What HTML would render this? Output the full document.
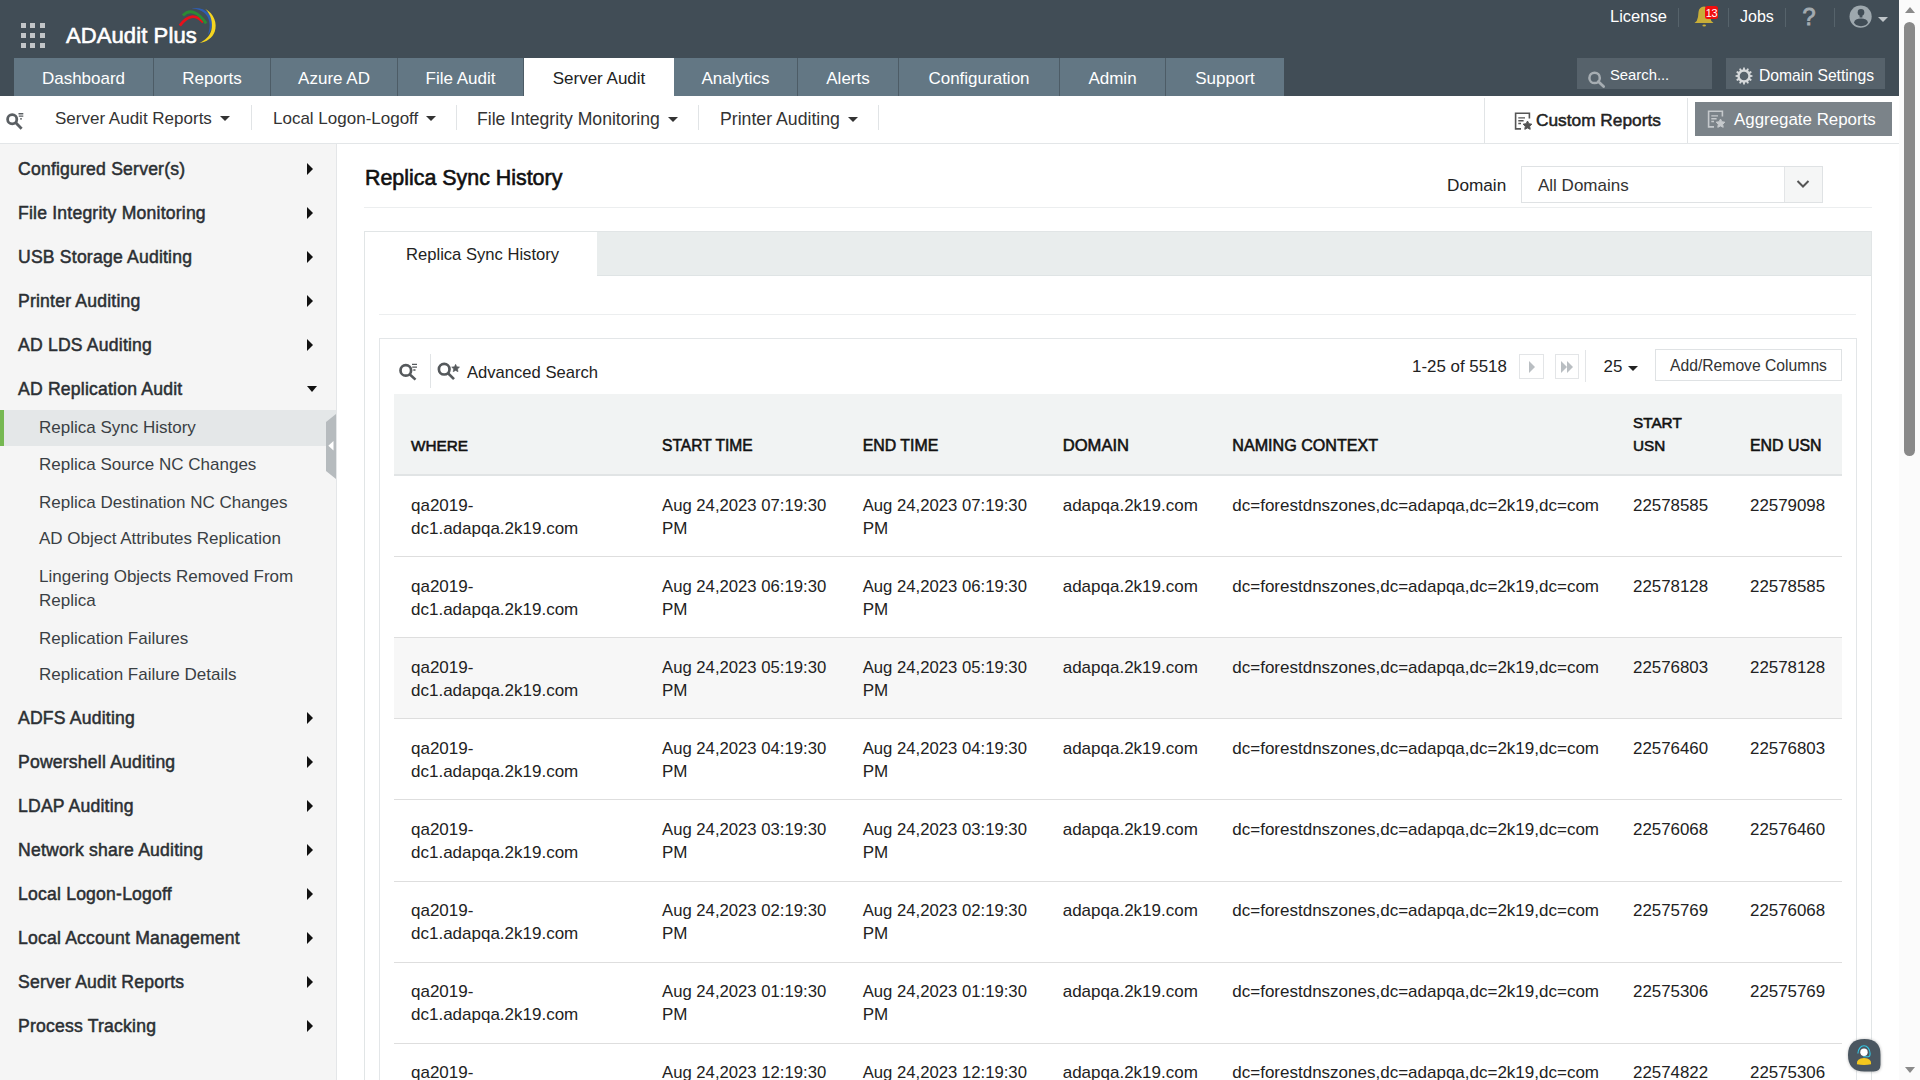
<!DOCTYPE html>
<html><head><meta charset="utf-8">
<style>
*{box-sizing:border-box;margin:0;padding:0}
html,body{width:1920px;height:1080px;overflow:hidden;background:#fff;font-family:"Liberation Sans",sans-serif;color:#222}
.a{position:absolute;white-space:nowrap}
#hdr{position:absolute;left:0;top:0;width:1899px;height:96px;background:#414d56}
.gsq{position:absolute;width:5px;height:5px;background:#c3c6c9}
.tab{position:absolute;top:58px;height:38px;background:#637784;color:#fff;font-size:17px;text-align:center;line-height:42px;border-right:1px solid #4d5c66}
.tab.on{background:#fff;color:#222;border-right:none}
.hsep{position:absolute;top:8px;width:1px;height:19px;background:#56636b}
#sub{position:absolute;left:0;top:96px;width:1899px;height:48px;background:#fff;border-bottom:1px solid #e3e6e8}
.sn{position:absolute;top:108px;font-size:17px;color:#333;line-height:22px}
.caret{display:inline-block;width:0;height:0;border-left:5px solid transparent;border-right:5px solid transparent;border-top:5px solid #333;vertical-align:middle;margin-left:8px;position:relative;top:-1px}
.vsep{position:absolute;width:1px;background:#e1e4e6}
#side{position:absolute;left:0;top:144px;width:337px;height:936px;background:#f5f5f5;border-right:1px solid #e4e6e8}
.si{position:absolute;left:18px;font-size:16.2px;font-weight:bold;color:#2e3236;line-height:20px}
.ss{position:absolute;left:39px;font-size:16.6px;color:#3a3e42;line-height:25px}
.rarr{position:absolute;left:307px;width:0;height:0;border-top:6px solid transparent;border-bottom:6px solid transparent;border-left:6px solid #111}
#scroll{position:absolute;left:1899px;top:0;width:21px;height:1080px;background:#fbfbfb}
</style></head><body>
<div id="hdr"></div>
<!-- grid icon -->
<div class="gsq" style="left:21px;top:23px"></div><div class="gsq" style="left:30px;top:23px"></div><div class="gsq" style="left:40px;top:23px"></div>
<div class="gsq" style="left:21px;top:33px"></div><div class="gsq" style="left:30px;top:33px"></div><div class="gsq" style="left:40px;top:33px"></div>
<div class="gsq" style="left:21px;top:43px"></div><div class="gsq" style="left:30px;top:43px"></div><div class="gsq" style="left:40px;top:43px"></div>
<div class="a" style="left:66px;top:23px;font-size:22px;color:#fff;line-height:26px;letter-spacing:0.1px;-webkit-text-stroke:0.6px #fff">ADAudit Plus</div>
<svg class="a" style="left:170px;top:0" width="60" height="50" viewBox="170 0 60 50">
<path d="M179.8 25.6 Q191.5 9.6 203.3 22.3" stroke="#e8101a" stroke-width="2.8" fill="none"/>
<path d="M182.9 15.6 Q193 5.2 206.2 23.4" stroke="#2c8a34" stroke-width="2.9" fill="none"/>
<path d="M191.6 8.3 C205 6.5 213.5 15 212 25 C211.5 29 210 32.5 207.8 35 C209.5 30 210 26 209.3 22 C208 14 202 9.5 191.6 8.3Z" fill="#2f5db0"/>
<path d="M205.4 9 C214 13.5 217.5 23.5 214.8 31.5 C212.5 38 206.5 42 199.4 43 C205 40.5 209.5 36.5 211.3 30.5 C213.2 23 211 14.5 205.4 9Z" fill="#f5d520"/>
</svg>

<!-- nav tabs -->
<div class="tab" style="left:14px;width:140px">Dashboard</div>
<div class="tab" style="left:154px;width:117px">Reports</div>
<div class="tab" style="left:271px;width:127px">Azure AD</div>
<div class="tab" style="left:398px;width:126px">File Audit</div>
<div class="tab on" style="left:524px;width:150px">Server Audit</div>
<div class="tab" style="left:674px;width:124px">Analytics</div>
<div class="tab" style="left:798px;width:101px">Alerts</div>
<div class="tab" style="left:899px;width:161px">Configuration</div>
<div class="tab" style="left:1060px;width:106px">Admin</div>
<div class="tab" style="left:1166px;width:118px;border-right:none">Support</div>

<!-- header right -->
<div class="a" style="left:1610px;top:6px;font-size:16.5px;color:#fff;line-height:20px">License</div>
<div class="hsep" style="left:1678px"></div>
<svg class="a" style="left:1690px;top:0px" width="32" height="30" viewBox="1690 0 32 30">
<path d="M1694.5 23 Q1697.5 21 1698 17 L1698.5 12 Q1699 7 1704 6.5 Q1709 7 1709.5 12 L1710 17 Q1710.5 21 1713.5 23 Z" fill="#c8ae38"/>
<ellipse cx="1704.2" cy="25.5" rx="1.8" ry="1" fill="#c8ae38"/>
<rect x="1705" y="6" width="13" height="13" rx="2.5" fill="#f00e0e"/>
<text x="1711.6" y="17" font-size="11" font-family="Liberation Sans" fill="#fff" text-anchor="middle" letter-spacing="-0.3">13</text>
</svg>
<div class="hsep" style="left:1728px"></div>
<div class="a" style="left:1740px;top:7px;font-size:16px;color:#fff;line-height:20px">Jobs</div>
<div class="hsep" style="left:1785px"></div>
<div class="a" style="left:1802.5px;top:4px;font-size:23.5px;color:#a3abb0;line-height:26px;-webkit-text-stroke:0.9px #a3abb0">?</div>
<div class="hsep" style="left:1834px"></div>
<svg class="a" style="left:1848px;top:5px" width="42" height="24" viewBox="0 0 42 24">
<defs><clipPath id="uc"><circle cx="12.6" cy="11.6" r="11.1"/></clipPath></defs>
<circle cx="12.6" cy="11.6" r="11.1" fill="#9ea8ae"/>
<circle cx="13" cy="7.4" r="3.3" fill="#414d56"/>
<rect x="11.6" y="9.5" width="2.8" height="3" fill="#414d56"/>
<ellipse cx="13" cy="17.3" rx="6.8" ry="3.9" fill="#414d56" clip-path="url(#uc)"/>
<path d="M30 12 L40 12 L35 17Z" fill="#bfc5c9"/>
</svg>
<div class="a" style="left:1577px;top:58px;width:135px;height:31px;background:#56626b"></div>
<svg class="a" style="left:1587px;top:70px" width="20" height="20" viewBox="0 0 20 20"><circle cx="7.6" cy="7.9" r="5.2" stroke="#a6adb2" stroke-width="2.5" fill="none"/><path d="M11.3 11.6 L16.6 16.6" stroke="#a6adb2" stroke-width="2.8" stroke-linecap="round"/></svg>
<div class="a" style="left:1610px;top:66px;font-size:14.8px;color:#fff;line-height:18px">Search...</div>
<div class="a" style="left:1726px;top:58px;width:159px;height:31px;background:#56626b"></div>
<svg class="a" style="left:1733.5px;top:66.4px" width="20" height="20" viewBox="0 0 20 20"><path fill-rule="evenodd" d="M16.52 8.97 L18.46 9.20 L18.46 10.80 L16.52 11.03 L16.16 12.37 L17.73 13.54 L16.93 14.92 L15.13 14.15 L14.15 15.13 L14.92 16.93 L13.54 17.73 L12.37 16.16 L11.03 16.52 L10.80 18.46 L9.20 18.46 L8.97 16.52 L7.63 16.16 L6.46 17.73 L5.08 16.93 L5.85 15.13 L4.87 14.15 L3.07 14.92 L2.27 13.54 L3.84 12.37 L3.48 11.03 L1.54 10.80 L1.54 9.20 L3.48 8.97 L3.84 7.63 L2.27 6.46 L3.07 5.08 L4.87 5.85 L5.85 4.87 L5.08 3.07 L6.46 2.27 L7.63 3.84 L8.97 3.48 L9.20 1.54 L10.80 1.54 L11.03 3.48 L12.37 3.84 L13.54 2.27 L14.92 3.07 L14.15 4.87 L15.13 5.85 L16.93 5.08 L17.73 6.46 L16.16 7.63Z M14.3 10 A4.3 4.3 0 1 0 5.7 10 A4.3 4.3 0 1 0 14.3 10Z" fill="#d6d9db"/></svg>
<div class="a" style="left:1759px;top:66.5px;font-size:15.7px;color:#fff;line-height:18px">Domain Settings</div>

<!-- scrollbar -->
<div id="scroll"></div>

<!-- sub nav -->
<div id="sub"></div>
<svg class="a" style="left:5px;top:110px" width="20" height="22" viewBox="0 0 20 22"><circle cx="7.2" cy="9.3" r="4.6" stroke="#5a5f63" stroke-width="2.8" fill="none"/><path d="M10.8 12.8 L16.6 18.8" stroke="#5a5f63" stroke-width="2.8"/><path d="M13.5 3.7h4.8M13.8 6.1h4.5M15 8.9h2" stroke="#5a5f63" stroke-width="1.4"/></svg>
<div class="sn" style="left:55px">Server Audit Reports<span class="caret"></span></div>
<div class="vsep" style="left:251px;top:105px;height:25px"></div>
<div class="sn" style="left:273px">Local Logon-Logoff<span class="caret"></span></div>
<div class="vsep" style="left:456px;top:105px;height:25px"></div>
<div class="sn" style="left:477px;font-size:17.6px">File Integrity Monitoring<span class="caret"></span></div>
<div class="vsep" style="left:698px;top:105px;height:25px"></div>
<div class="sn" style="left:720px;font-size:17.7px">Printer Auditing<span class="caret"></span></div>
<div class="vsep" style="left:878px;top:105px;height:25px"></div>
<div class="vsep" style="left:1484px;top:98px;height:45px"></div>
<svg class="a" style="left:1514px;top:112px" width="20" height="20" viewBox="0 0 20 20"><path d="M7 16.9 H1.6 V1.3 H15.4 V6.6" stroke="#555" stroke-width="1.6" fill="none"/><path d="M4.3 5.9 H11 M4.3 8.8 H9.6 M4.3 11.5 H7" stroke="#555" stroke-width="1.4"/><path d="M13.50 9.00 L14.85 11.74 L17.87 12.18 L15.69 14.31 L16.20 17.32 L13.50 15.90 L10.80 17.32 L11.31 14.31 L9.13 12.18 L12.15 11.74Z" fill="#555" stroke="#555" stroke-width="1" stroke-linejoin="round"/></svg>
<div class="a" style="left:1536px;top:109px;font-size:17.3px;color:#222;line-height:22px;-webkit-text-stroke:0.5px #222">Custom Reports</div>
<div class="vsep" style="left:1687px;top:98px;height:45px"></div>
<div class="a" style="left:1695px;top:102px;width:197px;height:34px;background:#7b8389"></div>
<svg class="a" style="left:1707px;top:110px" width="20" height="20" viewBox="0 0 20 20"><path d="M7 16.9 H1.6 V1.3 H15.4 V6.6" stroke="#c5c9cc" stroke-width="1.6" fill="none"/><path d="M4.3 5.9 H11 M4.3 8.8 H9.6 M4.3 11.5 H7" stroke="#c5c9cc" stroke-width="1.4"/><path d="M13.50 9.00 L14.85 11.74 L17.87 12.18 L15.69 14.31 L16.20 17.32 L13.50 15.90 L10.80 17.32 L11.31 14.31 L9.13 12.18 L12.15 11.74Z" fill="#c5c9cc" stroke="#c5c9cc" stroke-width="1" stroke-linejoin="round"/></svg>
<div class="a" style="left:1734px;top:109px;font-size:16.9px;color:#fff;line-height:22px">Aggregate Reports</div>

<div id="side"></div>
<div class="a" style="left:18px;top:158px;font-size:17.6px;line-height:22px;color:#2b2f33;-webkit-text-stroke:0.5px #2b2f33;letter-spacing:0.2px">Configured Server(s)</div>
<div class="rarr" style="top:163px"></div>
<div class="a" style="left:18px;top:202px;font-size:17.6px;line-height:22px;color:#2b2f33;-webkit-text-stroke:0.5px #2b2f33;letter-spacing:0.2px">File Integrity Monitoring</div>
<div class="rarr" style="top:207px"></div>
<div class="a" style="left:18px;top:246px;font-size:17.6px;line-height:22px;color:#2b2f33;-webkit-text-stroke:0.5px #2b2f33;letter-spacing:0.2px">USB Storage Auditing</div>
<div class="rarr" style="top:251px"></div>
<div class="a" style="left:18px;top:290px;font-size:17.6px;line-height:22px;color:#2b2f33;-webkit-text-stroke:0.5px #2b2f33;letter-spacing:0.2px">Printer Auditing</div>
<div class="rarr" style="top:295px"></div>
<div class="a" style="left:18px;top:334px;font-size:17.6px;line-height:22px;color:#2b2f33;-webkit-text-stroke:0.5px #2b2f33;letter-spacing:0.2px">AD LDS Auditing</div>
<div class="rarr" style="top:339px"></div>
<div class="a" style="left:18px;top:378px;font-size:17.6px;line-height:22px;color:#2b2f33;-webkit-text-stroke:0.5px #2b2f33;letter-spacing:0.2px">AD Replication Audit</div>
<div class="a" style="left:307px;top:386px;width:0;height:0;border-left:5.5px solid transparent;border-right:5.5px solid transparent;border-top:6px solid #111"></div>
<div class="a" style="left:0;top:410px;width:336px;height:36px;background:#e4e7e8"></div>
<div class="a" style="left:0;top:410px;width:4px;height:36px;background:#76b852"></div>
<div class="a" style="left:39px;top:417px;font-size:17px;line-height:22px;color:#3a3f44;">Replica Sync History</div>
<div class="a" style="left:39px;top:454px;font-size:17px;line-height:22px;color:#3a3f44;">Replica Source NC Changes</div>
<div class="a" style="left:39px;top:492px;font-size:17px;line-height:22px;color:#3a3f44;">Replica Destination NC Changes</div>
<div class="a" style="left:39px;top:528px;font-size:17px;line-height:22px;color:#3a3f44;">AD Object Attributes Replication</div>
<div class="a" style="left:39px;top:566px;font-size:17px;line-height:22px;color:#3a3f44;">Lingering Objects Removed From</div>
<div class="a" style="left:39px;top:590px;font-size:17px;line-height:22px;color:#3a3f44;">Replica</div>
<div class="a" style="left:39px;top:628px;font-size:17px;line-height:22px;color:#3a3f44;">Replication Failures</div>
<div class="a" style="left:39px;top:664px;font-size:17px;line-height:22px;color:#3a3f44;">Replication Failure Details</div>
<svg class="a" style="left:326px;top:414px" width="11" height="65" viewBox="0 0 11 65"><path d="M10 0 L0 8 L0 57 L10 65Z" fill="#b6bbbe"/><path d="M7.5 27 L2.3 31.8 L7.5 36.6Z" fill="#fff"/></svg>
<div class="a" style="left:18px;top:707px;font-size:17.6px;line-height:22px;color:#2b2f33;-webkit-text-stroke:0.5px #2b2f33;letter-spacing:0.2px">ADFS Auditing</div>
<div class="rarr" style="top:712px"></div>
<div class="a" style="left:18px;top:751px;font-size:17.6px;line-height:22px;color:#2b2f33;-webkit-text-stroke:0.5px #2b2f33;letter-spacing:0.2px">Powershell Auditing</div>
<div class="rarr" style="top:756px"></div>
<div class="a" style="left:18px;top:795px;font-size:17.6px;line-height:22px;color:#2b2f33;-webkit-text-stroke:0.5px #2b2f33;letter-spacing:0.2px">LDAP Auditing</div>
<div class="rarr" style="top:800px"></div>
<div class="a" style="left:18px;top:839px;font-size:17.6px;line-height:22px;color:#2b2f33;-webkit-text-stroke:0.5px #2b2f33;letter-spacing:0.2px">Network share Auditing</div>
<div class="rarr" style="top:844px"></div>
<div class="a" style="left:18px;top:883px;font-size:17.6px;line-height:22px;color:#2b2f33;-webkit-text-stroke:0.5px #2b2f33;letter-spacing:0.2px">Local Logon-Logoff</div>
<div class="rarr" style="top:888px"></div>
<div class="a" style="left:18px;top:927px;font-size:17.6px;line-height:22px;color:#2b2f33;-webkit-text-stroke:0.5px #2b2f33;letter-spacing:0.2px">Local Account Management</div>
<div class="rarr" style="top:932px"></div>
<div class="a" style="left:18px;top:971px;font-size:17.6px;line-height:22px;color:#2b2f33;-webkit-text-stroke:0.5px #2b2f33;letter-spacing:0.2px">Server Audit Reports</div>
<div class="rarr" style="top:976px"></div>
<div class="a" style="left:18px;top:1015px;font-size:17.6px;line-height:22px;color:#2b2f33;-webkit-text-stroke:0.5px #2b2f33;letter-spacing:0.2px">Process Tracking</div>
<div class="rarr" style="top:1020px"></div>
<div class="a" style="left:365px;top:165px;font-size:21.4px;line-height:27px;color:#111;-webkit-text-stroke:0.6px #111">Replica Sync History</div>
<div class="a" style="left:1447px;top:174px;font-size:17.2px;line-height:22px;color:#222;">Domain</div>
<div class="a" style="left:1521px;top:166px;width:302px;height:37px;border:1px solid #dfe2e4;background:#fff"></div>
<div class="a" style="left:1784px;top:167px;width:38px;height:35px;background:#f5f6f6;border-left:1px solid #e3e5e7"></div>
<svg class="a" style="left:1796px;top:179px" width="14" height="10" viewBox="0 0 14 10"><path d="M1.5 2 L7 7.5 L12.5 2" stroke="#555" stroke-width="2" fill="none"/></svg>
<div class="a" style="left:1538px;top:175px;font-size:17px;line-height:22px;color:#333;">All Domains</div>
<div class="a" style="left:364px;top:207px;width:1508px;height:1px;background:#eceeef"></div>
<div class="a" style="left:364px;top:231px;width:1508px;height:860px;border:1px solid #e1e5e6;background:#fff"></div>
<div class="a" style="left:597px;top:232px;width:1274px;height:44px;background:#e9eded;border-bottom:1px solid #dfe4e5"></div>
<div class="a" style="left:406px;top:244px;font-size:16.6px;line-height:21px;color:#222;">Replica Sync History</div>
<div class="a" style="left:379px;top:314px;width:1477px;height:1px;background:#eceeef"></div>
<div class="a" style="left:379px;top:338px;width:1478px;height:760px;border:1px solid #e3e6e8"></div>
<svg class="a" style="left:397px;top:362px" width="22" height="20" viewBox="0 0 22 20"><circle cx="8.8" cy="8.4" r="5.3" stroke="#55595c" stroke-width="2.7" fill="none"/><path d="M12.6 12.2 L18.5 17.6" stroke="#55595c" stroke-width="2.6"/><path d="M15 2.4h5M15.2 5.1h4.8M16.3 8h2.2" stroke="#55595c" stroke-width="1.3"/></svg>
<div class="a" style="left:430px;top:354px;width:1px;height:34px;background:#e1e4e6"></div>
<svg class="a" style="left:436px;top:361px" width="26" height="21" viewBox="0 0 26 21"><circle cx="8.2" cy="8.2" r="5.3" stroke="#55595c" stroke-width="2.7" fill="none"/><path d="M11.8 12 L18 18.2" stroke="#55595c" stroke-width="2.6"/><path d="M19.6 3.3l1.2 2.5 2.7.3-2 1.9.5 2.7-2.4-1.3-2.4 1.3.5-2.7-2-1.9 2.7-.3z" fill="#55595c" stroke="#55595c" stroke-width="0.6" stroke-linejoin="round"/></svg>
<div class="a" style="left:467px;top:362px;font-size:16.6px;line-height:21px;color:#222;">Advanced Search</div>
<div class="a" style="left:1412px;top:356px;font-size:16.9px;line-height:22px;color:#222;">1-25 of 5518</div>
<div class="a" style="left:1519px;top:354px;width:25px;height:25px;border:1px solid #e3e5e7;background:#fff"></div>
<div class="a" style="left:1529px;top:361px;width:0;height:0;border-top:6px solid transparent;border-bottom:6px solid transparent;border-left:6px solid #b9bec2"></div>
<div class="a" style="left:1555px;top:354px;width:24px;height:25px;border:1px solid #e3e5e7;background:#fff"></div>
<div class="a" style="left:1561px;top:361px;width:0;height:0;border-top:6px solid transparent;border-bottom:6px solid transparent;border-left:6px solid #b9bec2"></div>
<div class="a" style="left:1567px;top:361px;width:0;height:0;border-top:6px solid transparent;border-bottom:6px solid transparent;border-left:6px solid #b9bec2"></div>
<div class="a" style="left:1585px;top:350px;width:1px;height:32px;background:#e3e5e7"></div>
<div class="a" style="left:1603.5px;top:356px;font-size:16.9px;line-height:22px;color:#222;">25</div>
<div class="a" style="left:1628px;top:366px;width:0;height:0;border-left:5px solid transparent;border-right:5px solid transparent;border-top:5px solid #222"></div>
<div class="a" style="left:1655px;top:349px;width:187px;height:32px;border:1px solid #dfe2e4;background:#fff"></div>
<div class="a" style="left:1670px;top:356px;font-size:15.7px;line-height:20px;color:#333;">Add/Remove Columns</div>
<div class="a" style="left:394px;top:394px;width:1448px;height:82px;background:#f1f3f3;border-bottom:2px solid #e1e4e5"></div>
<div class="a" style="left:411px;top:436px;font-size:15.3px;line-height:20px;color:#111;-webkit-text-stroke:0.55px #111">WHERE</div>
<div class="a" style="left:662px;top:436px;font-size:15.6px;line-height:20px;color:#111;-webkit-text-stroke:0.55px #111">START TIME</div>
<div class="a" style="left:862.7px;top:436px;font-size:15.9px;line-height:20px;color:#111;-webkit-text-stroke:0.55px #111">END TIME</div>
<div class="a" style="left:1062.7px;top:435px;font-size:16.6px;line-height:21px;color:#111;-webkit-text-stroke:0.55px #111">DOMAIN</div>
<div class="a" style="left:1232.3px;top:435px;font-size:16.1px;line-height:21px;color:#111;-webkit-text-stroke:0.55px #111">NAMING CONTEXT</div>
<div class="a" style="left:1750px;top:436px;font-size:15.9px;line-height:20px;color:#111;-webkit-text-stroke:0.55px #111">END USN</div>
<div class="a" style="left:1633px;top:413px;font-size:15.3px;line-height:20px;color:#111;-webkit-text-stroke:0.55px #111">START</div>
<div class="a" style="left:1633px;top:436px;font-size:15.3px;line-height:20px;color:#111;-webkit-text-stroke:0.55px #111">USN</div>
<div class="a" style="left:394px;top:556px;width:1448px;height:1px;background:#dedede"></div>
<div class="a" style="left:411px;top:495px;font-size:17px;line-height:22px;color:#222;">qa2019-</div>
<div class="a" style="left:411px;top:518px;font-size:17px;line-height:22px;color:#222;">dc1.adapqa.2k19.com</div>
<div class="a" style="left:662px;top:495px;font-size:16.7px;line-height:21px;color:#222;">Aug 24,2023 07:19:30</div>
<div class="a" style="left:662px;top:518px;font-size:17px;line-height:22px;color:#222;">PM</div>
<div class="a" style="left:862.7px;top:495px;font-size:16.7px;line-height:21px;color:#222;">Aug 24,2023 07:19:30</div>
<div class="a" style="left:862.7px;top:518px;font-size:17px;line-height:22px;color:#222;">PM</div>
<div class="a" style="left:1062.7px;top:495px;font-size:17px;line-height:22px;color:#222;">adapqa.2k19.com</div>
<div class="a" style="left:1232.3px;top:495px;font-size:17px;line-height:22px;color:#222;">dc=forestdnszones,dc=adapqa,dc=2k19,dc=com</div>
<div class="a" style="left:1633px;top:495px;font-size:16.9px;line-height:22px;color:#222;">22578585</div>
<div class="a" style="left:1750px;top:495px;font-size:16.9px;line-height:22px;color:#222;">22579098</div>
<div class="a" style="left:394px;top:637px;width:1448px;height:1px;background:#dedede"></div>
<div class="a" style="left:411px;top:576px;font-size:17px;line-height:22px;color:#222;">qa2019-</div>
<div class="a" style="left:411px;top:599px;font-size:17px;line-height:22px;color:#222;">dc1.adapqa.2k19.com</div>
<div class="a" style="left:662px;top:576px;font-size:16.7px;line-height:21px;color:#222;">Aug 24,2023 06:19:30</div>
<div class="a" style="left:662px;top:599px;font-size:17px;line-height:22px;color:#222;">PM</div>
<div class="a" style="left:862.7px;top:576px;font-size:16.7px;line-height:21px;color:#222;">Aug 24,2023 06:19:30</div>
<div class="a" style="left:862.7px;top:599px;font-size:17px;line-height:22px;color:#222;">PM</div>
<div class="a" style="left:1062.7px;top:576px;font-size:17px;line-height:22px;color:#222;">adapqa.2k19.com</div>
<div class="a" style="left:1232.3px;top:576px;font-size:17px;line-height:22px;color:#222;">dc=forestdnszones,dc=adapqa,dc=2k19,dc=com</div>
<div class="a" style="left:1633px;top:576px;font-size:16.9px;line-height:22px;color:#222;">22578128</div>
<div class="a" style="left:1750px;top:576px;font-size:16.9px;line-height:22px;color:#222;">22578585</div>
<div class="a" style="left:394px;top:638px;width:1448px;height:80px;background:#f7f7f7"></div>
<div class="a" style="left:394px;top:718px;width:1448px;height:1px;background:#dedede"></div>
<div class="a" style="left:411px;top:657px;font-size:17px;line-height:22px;color:#222;">qa2019-</div>
<div class="a" style="left:411px;top:680px;font-size:17px;line-height:22px;color:#222;">dc1.adapqa.2k19.com</div>
<div class="a" style="left:662px;top:657px;font-size:16.7px;line-height:21px;color:#222;">Aug 24,2023 05:19:30</div>
<div class="a" style="left:662px;top:680px;font-size:17px;line-height:22px;color:#222;">PM</div>
<div class="a" style="left:862.7px;top:657px;font-size:16.7px;line-height:21px;color:#222;">Aug 24,2023 05:19:30</div>
<div class="a" style="left:862.7px;top:680px;font-size:17px;line-height:22px;color:#222;">PM</div>
<div class="a" style="left:1062.7px;top:657px;font-size:17px;line-height:22px;color:#222;">adapqa.2k19.com</div>
<div class="a" style="left:1232.3px;top:657px;font-size:17px;line-height:22px;color:#222;">dc=forestdnszones,dc=adapqa,dc=2k19,dc=com</div>
<div class="a" style="left:1633px;top:657px;font-size:16.9px;line-height:22px;color:#222;">22576803</div>
<div class="a" style="left:1750px;top:657px;font-size:16.9px;line-height:22px;color:#222;">22578128</div>
<div class="a" style="left:394px;top:799px;width:1448px;height:1px;background:#dedede"></div>
<div class="a" style="left:411px;top:738px;font-size:17px;line-height:22px;color:#222;">qa2019-</div>
<div class="a" style="left:411px;top:761px;font-size:17px;line-height:22px;color:#222;">dc1.adapqa.2k19.com</div>
<div class="a" style="left:662px;top:738px;font-size:16.7px;line-height:21px;color:#222;">Aug 24,2023 04:19:30</div>
<div class="a" style="left:662px;top:761px;font-size:17px;line-height:22px;color:#222;">PM</div>
<div class="a" style="left:862.7px;top:738px;font-size:16.7px;line-height:21px;color:#222;">Aug 24,2023 04:19:30</div>
<div class="a" style="left:862.7px;top:761px;font-size:17px;line-height:22px;color:#222;">PM</div>
<div class="a" style="left:1062.7px;top:738px;font-size:17px;line-height:22px;color:#222;">adapqa.2k19.com</div>
<div class="a" style="left:1232.3px;top:738px;font-size:17px;line-height:22px;color:#222;">dc=forestdnszones,dc=adapqa,dc=2k19,dc=com</div>
<div class="a" style="left:1633px;top:738px;font-size:16.9px;line-height:22px;color:#222;">22576460</div>
<div class="a" style="left:1750px;top:738px;font-size:16.9px;line-height:22px;color:#222;">22576803</div>
<div class="a" style="left:394px;top:881px;width:1448px;height:1px;background:#dedede"></div>
<div class="a" style="left:411px;top:819px;font-size:17px;line-height:22px;color:#222;">qa2019-</div>
<div class="a" style="left:411px;top:842px;font-size:17px;line-height:22px;color:#222;">dc1.adapqa.2k19.com</div>
<div class="a" style="left:662px;top:819px;font-size:16.7px;line-height:21px;color:#222;">Aug 24,2023 03:19:30</div>
<div class="a" style="left:662px;top:842px;font-size:17px;line-height:22px;color:#222;">PM</div>
<div class="a" style="left:862.7px;top:819px;font-size:16.7px;line-height:21px;color:#222;">Aug 24,2023 03:19:30</div>
<div class="a" style="left:862.7px;top:842px;font-size:17px;line-height:22px;color:#222;">PM</div>
<div class="a" style="left:1062.7px;top:819px;font-size:17px;line-height:22px;color:#222;">adapqa.2k19.com</div>
<div class="a" style="left:1232.3px;top:819px;font-size:17px;line-height:22px;color:#222;">dc=forestdnszones,dc=adapqa,dc=2k19,dc=com</div>
<div class="a" style="left:1633px;top:819px;font-size:16.9px;line-height:22px;color:#222;">22576068</div>
<div class="a" style="left:1750px;top:819px;font-size:16.9px;line-height:22px;color:#222;">22576460</div>
<div class="a" style="left:394px;top:962px;width:1448px;height:1px;background:#dedede"></div>
<div class="a" style="left:411px;top:900px;font-size:17px;line-height:22px;color:#222;">qa2019-</div>
<div class="a" style="left:411px;top:923px;font-size:17px;line-height:22px;color:#222;">dc1.adapqa.2k19.com</div>
<div class="a" style="left:662px;top:900px;font-size:16.7px;line-height:21px;color:#222;">Aug 24,2023 02:19:30</div>
<div class="a" style="left:662px;top:923px;font-size:17px;line-height:22px;color:#222;">PM</div>
<div class="a" style="left:862.7px;top:900px;font-size:16.7px;line-height:21px;color:#222;">Aug 24,2023 02:19:30</div>
<div class="a" style="left:862.7px;top:923px;font-size:17px;line-height:22px;color:#222;">PM</div>
<div class="a" style="left:1062.7px;top:900px;font-size:17px;line-height:22px;color:#222;">adapqa.2k19.com</div>
<div class="a" style="left:1232.3px;top:900px;font-size:17px;line-height:22px;color:#222;">dc=forestdnszones,dc=adapqa,dc=2k19,dc=com</div>
<div class="a" style="left:1633px;top:900px;font-size:16.9px;line-height:22px;color:#222;">22575769</div>
<div class="a" style="left:1750px;top:900px;font-size:16.9px;line-height:22px;color:#222;">22576068</div>
<div class="a" style="left:394px;top:1043px;width:1448px;height:1px;background:#dedede"></div>
<div class="a" style="left:411px;top:981px;font-size:17px;line-height:22px;color:#222;">qa2019-</div>
<div class="a" style="left:411px;top:1004px;font-size:17px;line-height:22px;color:#222;">dc1.adapqa.2k19.com</div>
<div class="a" style="left:662px;top:981px;font-size:16.7px;line-height:21px;color:#222;">Aug 24,2023 01:19:30</div>
<div class="a" style="left:662px;top:1004px;font-size:17px;line-height:22px;color:#222;">PM</div>
<div class="a" style="left:862.7px;top:981px;font-size:16.7px;line-height:21px;color:#222;">Aug 24,2023 01:19:30</div>
<div class="a" style="left:862.7px;top:1004px;font-size:17px;line-height:22px;color:#222;">PM</div>
<div class="a" style="left:1062.7px;top:981px;font-size:17px;line-height:22px;color:#222;">adapqa.2k19.com</div>
<div class="a" style="left:1232.3px;top:981px;font-size:17px;line-height:22px;color:#222;">dc=forestdnszones,dc=adapqa,dc=2k19,dc=com</div>
<div class="a" style="left:1633px;top:981px;font-size:16.9px;line-height:22px;color:#222;">22575306</div>
<div class="a" style="left:1750px;top:981px;font-size:16.9px;line-height:22px;color:#222;">22575769</div>
<div class="a" style="left:394px;top:1124px;width:1448px;height:1px;background:#dedede"></div>
<div class="a" style="left:411px;top:1062px;font-size:17px;line-height:22px;color:#222;">qa2019-</div>
<div class="a" style="left:411px;top:1085px;font-size:17px;line-height:22px;color:#222;">dc1.adapqa.2k19.com</div>
<div class="a" style="left:662px;top:1062px;font-size:16.7px;line-height:21px;color:#222;">Aug 24,2023 12:19:30</div>
<div class="a" style="left:662px;top:1085px;font-size:17px;line-height:22px;color:#222;">PM</div>
<div class="a" style="left:862.7px;top:1062px;font-size:16.7px;line-height:21px;color:#222;">Aug 24,2023 12:19:30</div>
<div class="a" style="left:862.7px;top:1085px;font-size:17px;line-height:22px;color:#222;">PM</div>
<div class="a" style="left:1062.7px;top:1062px;font-size:17px;line-height:22px;color:#222;">adapqa.2k19.com</div>
<div class="a" style="left:1232.3px;top:1062px;font-size:17px;line-height:22px;color:#222;">dc=forestdnszones,dc=adapqa,dc=2k19,dc=com</div>
<div class="a" style="left:1633px;top:1062px;font-size:16.9px;line-height:22px;color:#222;">22574822</div>
<div class="a" style="left:1750px;top:1062px;font-size:16.9px;line-height:22px;color:#222;">22575306</div>
<svg class="a" style="left:1844px;top:1035px" width="42" height="42" viewBox="0 0 42 42"><defs><filter id="sh" x="-30%" y="-30%" width="160%" height="160%"><feGaussianBlur stdDeviation="1.5"/></filter></defs><path d="M21 4 Q37 4 37 20 L37 30 Q37 37 30 37 L21 37 Q4 37 4 20.5 Q4 4 21 4Z" fill="#000" opacity="0.25" filter="url(#sh)"/><path d="M20.5 4 Q36.5 4 36.5 19.5 L36.5 29.5 Q36.5 36.5 29.5 36.5 L20.5 36.5 Q4 36.5 4 20 Q4 4 20.5 4Z" fill="#4a5660"/><circle cx="20" cy="17.2" r="3.7" fill="#fff"/><path d="M13.9 18.6 A6.1 7.8 0 0 1 26.1 18.6 Q26.2 21.6 24.3 21.8 L19.2 21.8" stroke="#33c8e6" stroke-width="1.1" fill="none"/><path d="M12.9 29.2 Q12.4 23 20 22.9 Q27.6 23 27.1 29.2 Q20 30.6 12.9 29.2Z" fill="#f4c81e"/></svg>
<div class="a" style="left:1904px;top:22px;width:11px;height:434px;background:#898989;border-radius:5.5px"></div>
<div class="a" style="left:1904.5px;top:7px;width:0;height:0;border-left:5px solid transparent;border-right:5px solid transparent;border-bottom:6px solid #8a8a8a"></div>
<div class="a" style="left:1904.5px;top:1067px;width:0;height:0;border-left:5px solid transparent;border-right:5px solid transparent;border-top:6px solid #8a8a8a"></div>
</body></html>
